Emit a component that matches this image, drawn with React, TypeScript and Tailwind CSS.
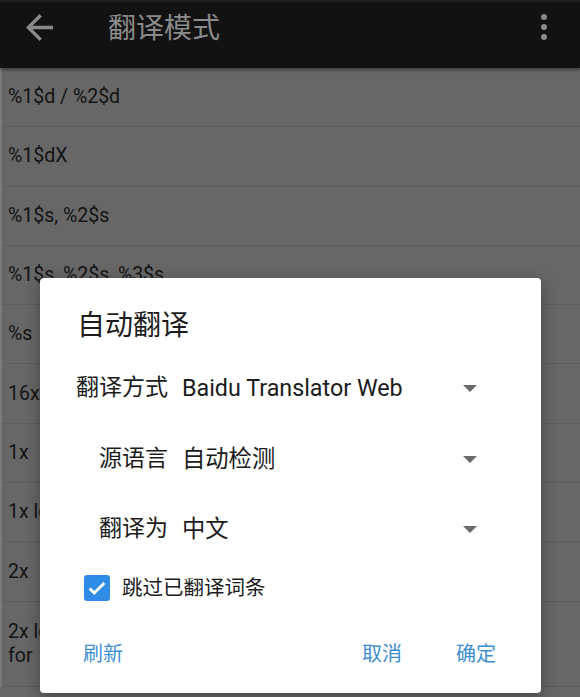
const rows: string[][] = [
  ["%1$d / %2$d"],
  ["%1$dX"],
  ["%1$s, %2$s"],
  ["%1$s, %2$s, %3$s"],
  ["%s"],
  ["16x"],
  ["1x"],
  ["1x lower"],
  ["2x"],
  ["2x lower", "for"],
];

function Caret() {
  return (
    <svg width="14" height="7" viewBox="0 0 14 7" className="ml-auto shrink-0">
      <path d="M0 0h14L7 7z" fill="#6b6b6b" />
    </svg>
  );
}

function SelectRow({ label, value, indent }: { label: string; value: string; indent?: boolean }) {
  return (
    <div className={`flex h-[70px] items-center pr-[64px] ${indent ? "pl-[59px]" : "pl-[36px]"}`}>
      <span className="text-[23px]">{label}</span>
      <span className="ml-[14px] text-[23.3px]">{value}</span>
      <Caret />
    </div>
  );
}

export default function App() {
  return (
    <div
      className="relative h-[697px] w-[580px] overflow-hidden bg-[#676767]"
      style={{ fontFamily: 'Roboto, "Noto Sans CJK SC", sans-serif' }}
    >
      {/* app bar */}
      <div className="relative h-[68px] border-t-2 border-[#1e1e1e] bg-[#121212] shadow-[0_2px_3px_rgba(0,0,0,0.4)]">
        <svg width="27" height="27" viewBox="4 4 16 16" className="absolute left-[26px] top-[12px]">
          <path d="M20 11H7.83l5.59-5.59L12 4l-8 8 8 8 1.41-1.41L7.83 13H20v-2z" fill="#8a8a8a" />
        </svg>
        <div className="absolute left-[108px] top-[7px] text-[28px] leading-[40px] text-[#8a8a8a]">翻译模式</div>
        <div className="absolute left-[541px] top-[12px] flex flex-col gap-[4px]">
          <span className="size-[6px] rounded-full bg-[#8a8a8a]" />
          <span className="size-[6px] rounded-full bg-[#8a8a8a]" />
          <span className="size-[6px] rounded-full bg-[#8a8a8a]" />
        </div>
      </div>

      {/* dimmed list */}
      <div className="border-l-2 border-[#7a7a7a]">
        {rows.map((r, i) => (
          <div
            key={i}
            className={`flex flex-col justify-center border-b border-[#5d5d5d] pl-[6px] text-[19.5px] leading-[24px] text-[#141414] ${
              r.length > 1 ? "h-[85px]" : "h-[59.3px]"
            }`}
          >
            {r.map((t) => (
              <div key={t}>{t}</div>
            ))}
          </div>
        ))}
      </div>

      {/* dialog */}
      <div className="absolute left-[40px] top-[278px] w-[501px] rounded-[4px] bg-white pt-[30px] pb-[9px] text-[#1c1c1c] shadow-[0_4px_16px_rgba(0,0,0,0.35)]">
        <div className="pl-[37px] text-[28px] leading-[36px]">自动翻译</div>
        <div className="mt-[9px]">
          <SelectRow label="翻译方式" value="Baidu Translator Web" />
          <div className="h-px" />
          <SelectRow label="源语言" value="自动检测" indent />
          <SelectRow label="翻译为" value="中文" indent />
        </div>
        <div className="flex h-[48px] items-center pl-[44px]">
          <span className="flex size-[26px] items-center justify-center rounded-[3px] bg-[#2e8be6]">
            <svg width="22" height="22" viewBox="0 0 24 24">
              <path d="M4 12.5l5 5L20 6.5" fill="none" stroke="white" strokeWidth="3.2" />
            </svg>
          </span>
          <span className="ml-[12px] text-[20.5px]">跳过已翻译词条</span>
        </div>
        <div className="mt-[12px] flex h-[60px] items-center text-[20px] text-[#3d8ed1]">
          <span className="pl-[43px]">刷新</span>
          <span className="ml-auto">取消</span>
          <span className="ml-[54px] mr-[45px]">确定</span>
        </div>
      </div>
    </div>
  );
}
